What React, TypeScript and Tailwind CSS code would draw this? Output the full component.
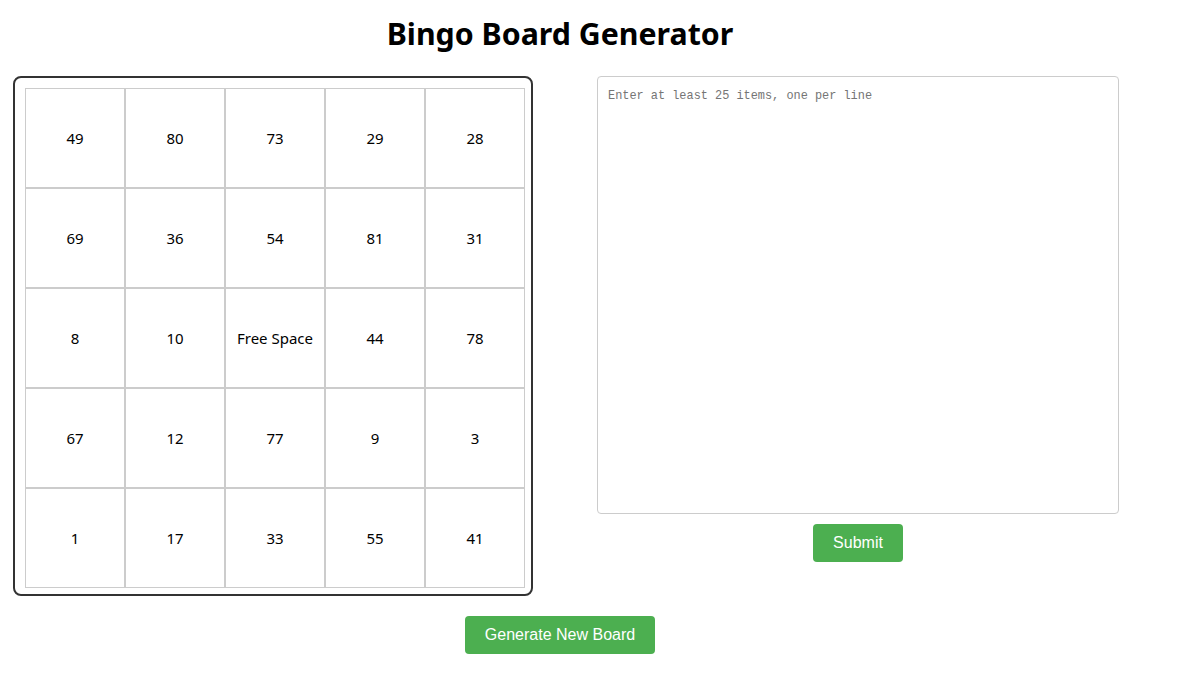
import React from "react";

const nums = [
  ["49", "80", "73", "29", "28"],
  ["69", "36", "54", "81", "31"],
  ["8", "10", "Free Space", "44", "78"],
  ["67", "12", "77", "9", "3"],
  ["1", "17", "33", "55", "41"],
];

export default function App() {
  return (
    <div className="w-[1120px] bg-white text-black" style={{ fontFamily: '"Noto Sans", sans-serif' }}>
      <h1 className="text-center text-[30.3px] font-bold leading-[40px] pt-[14px] mb-[22px]">
        Bingo Board Generator
      </h1>
      <div className="flex items-start pl-[13px]">
        <div className="w-[520px] h-[520px] border-2 border-[#333] rounded-[8px] p-[10px] shrink-0">
          <div className="grid grid-cols-[repeat(5,100px)] grid-rows-[repeat(5,100px)] w-[500px]">
            {nums.flat().map((n, i) => (
              <div
                key={i}
                className="w-[100px] h-[100px] border border-[#ccc] flex items-center justify-center text-[15px]"
              >
                {n}
              </div>
            ))}
          </div>
        </div>
        <div className="ml-[64px] flex flex-col items-center">
          <textarea
            className="w-[522px] h-[438px] border border-[#ccc] rounded-[4px] px-[10px] pt-[11px] pb-[10px] text-[11.9px] leading-[16px] placeholder:text-[#757575] resize-none outline-none"
            style={{ fontFamily: '"Liberation Mono", monospace' }}
            placeholder="Enter at least 25 items, one per line"
          />
          <button
            className="mt-[10px] h-[38px] px-[20px] bg-[#4caf50] text-white text-[16px] rounded-[4px]"
            style={{ fontFamily: '"Liberation Sans", Arial, sans-serif' }}
          >
            Submit
          </button>
        </div>
      </div>
      <div className="flex justify-center mt-[20px]">
        <button
          className="h-[38px] px-[20px] bg-[#4caf50] text-white text-[16px] rounded-[4px]"
          style={{ fontFamily: '"Liberation Sans", Arial, sans-serif' }}
        >
          Generate New Board
        </button>
      </div>
    </div>
  );
}
